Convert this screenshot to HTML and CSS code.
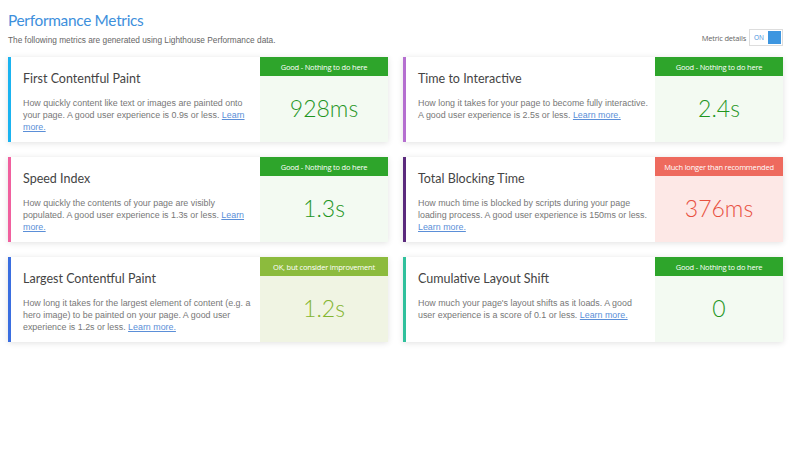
FILE: index.html
```html
<!DOCTYPE html>
<html>
<head>
<meta charset="utf-8">
<link rel="stylesheet" href="styles.css">
</head>
<body>
<div class="page">
  <div class="header">
    <div class="head-text">
      <h1 class="title">Performance Metrics</h1>
      <p class="subtitle">The following metrics are generated using Lighthouse Performance data.</p>
    </div>
    <div class="toggle-wrap">
      <span class="toggle-label">Metric details</span>
      <span class="toggle"><span class="toggle-on">ON</span><span class="toggle-knob"></span></span>
    </div>
  </div>
  <div class="grid">
    <div class="card c-fcp">
      <div class="info">
        <h2 class="name">First Contentful Paint</h2>
        <p class="desc">How quickly content like text or images are painted onto your page. A good user experience is 0.9s or less. <a href="#">Learn more.</a></p>
      </div>
      <div class="score good">
        <div class="badge">Good - Nothing to do here</div>
        <div class="value">928ms</div>
      </div>
    </div>
    <div class="card c-tti">
      <div class="info">
        <h2 class="name">Time to Interactive</h2>
        <p class="desc">How long it takes for your page to become fully interactive. A good user experience is 2.5s or less. <a href="#">Learn more.</a></p>
      </div>
      <div class="score good">
        <div class="badge">Good - Nothing to do here</div>
        <div class="value">2.4s</div>
      </div>
    </div>
    <div class="card c-si">
      <div class="info">
        <h2 class="name">Speed Index</h2>
        <p class="desc">How quickly the contents of your page are visibly populated. A good user experience is 1.3s or less. <a href="#">Learn more.</a></p>
      </div>
      <div class="score good">
        <div class="badge">Good - Nothing to do here</div>
        <div class="value">1.3s</div>
      </div>
    </div>
    <div class="card c-tbt">
      <div class="info">
        <h2 class="name">Total Blocking Time</h2>
        <p class="desc">How much time is blocked by scripts during your page loading process. A good user experience is 150ms or less. <a href="#">Learn more.</a></p>
      </div>
      <div class="score bad">
        <div class="badge">Much longer than recommended</div>
        <div class="value">376ms</div>
      </div>
    </div>
    <div class="card c-lcp">
      <div class="info">
        <h2 class="name">Largest Contentful Paint</h2>
        <p class="desc">How long it takes for the largest element of content (e.g. a hero image) to be painted on your page. A good user experience is 1.2s or less. <a href="#">Learn more.</a></p>
      </div>
      <div class="score ok">
        <div class="badge">OK, but consider improvement</div>
        <div class="value">1.2s</div>
      </div>
    </div>
    <div class="card c-cls">
      <div class="info">
        <h2 class="name">Cumulative Layout Shift</h2>
        <p class="desc">How much your page's layout shifts as it loads. A good user experience is a score of 0.1 or less. <a href="#">Learn more.</a></p>
      </div>
      <div class="score good">
        <div class="badge">Good - Nothing to do here</div>
        <div class="value">0</div>
      </div>
    </div>
  </div>
</div>
</body>
</html>
```

FILE: styles.css
```css
html, body {
  margin: 0;
  padding: 0;
  background: #ffffff;
}

.page {
  padding: 8px 17px 8px 8px;
  font-family: "Liberation Sans", Arial, sans-serif;
}

.header {
  display: flex;
  justify-content: space-between;
  align-items: flex-end;
  height: 38px;
  margin-bottom: 11px;
}

.title {
  margin: 0;
  font-family: Lato, "Open Sans", sans-serif;
  font-weight: 400;
  font-size: 15.4px;
  letter-spacing: -0.3px;
  line-height: 22px;
  color: #3d8fdc;
}

.subtitle {
  margin: 3px 0 0;
  font-size: 8.3px;
  line-height: 12px;
  color: #666666;
}

.toggle-wrap {
  display: flex;
  align-items: center;
  gap: 3px;
  margin-bottom: 0;
}

.toggle-label {
  font-family: "Open Sans", sans-serif;
  font-size: 7.5px;
  letter-spacing: -0.2px;
  color: #666666;
}

.toggle {
  display: flex;
  align-items: center;
  gap: 4px;
  height: 17px;
  border: 1px solid #dddddd;
  padding: 0 1px 0 4px;
  box-sizing: border-box;
}

.toggle-on {
  font-family: "Open Sans", sans-serif;
  font-size: 6.5px;
  line-height: 8px;
  color: #3d8fdc;
}

.toggle-knob {
  width: 13px;
  height: 13px;
  background: #3d96e0;
}

.grid {
  display: grid;
  grid-template-columns: 1fr 1fr;
  column-gap: 15px;
  row-gap: 15px;
}

.card {
  display: flex;
  height: 85px;
  background: #ffffff;
  border-left: 3px solid #1ab3f0;
  box-shadow: 0 1px 6px rgba(0, 0, 0, 0.12);
}

.c-fcp { border-left-color: #1ab3f0; }
.c-tti { border-left-color: #b56fd0; }
.c-si { border-left-color: #f0609e; }
.c-tbt { border-left-color: #5b2a7d; }
.c-lcp { border-left-color: #3a6ee0; }
.c-cls { border-left-color: #30c09c; }

.info {
  flex: 1;
  padding: 14px 4px 0 12px;
  min-width: 0;
}

.name {
  margin: 0;
  font-family: Lato, "Open Sans", sans-serif;
  font-weight: 400;
  font-size: 12.5px;
  line-height: 16px;
  color: #444444;
}

.desc {
  margin: 10px 0 0;
  font-size: 8.9px;
  line-height: 12px;
  color: #777777;
}

.desc a {
  color: #5b8fd8;
  text-decoration: underline;
}

.score {
  width: 128px;
  flex: none;
  display: flex;
  flex-direction: column;
}

.badge {
  height: 19px;
  display: flex;
  align-items: center;
  justify-content: center;
  font-family: "Open Sans", sans-serif;
  font-size: 7.5px;
  letter-spacing: -0.2px;
  color: #ffffff;
}

.value {
  flex: 1;
  display: flex;
  align-items: center;
  justify-content: center;
  font-family: Lato, "Open Sans", sans-serif;
  font-weight: 300;
  font-size: 23px;
  padding-bottom: 2px;
}

.good .badge { background: #2ea52b; }
.good .value { background: #f3faf2; color: #1f961f; }

.bad .badge { background: #ee6a5e; }
.bad .value { background: #fde8e6; color: #e8503f; }

.ok .badge { background: #8cbb3d; }
.ok .value { background: #f0f4e3; color: #84b530; }
```
